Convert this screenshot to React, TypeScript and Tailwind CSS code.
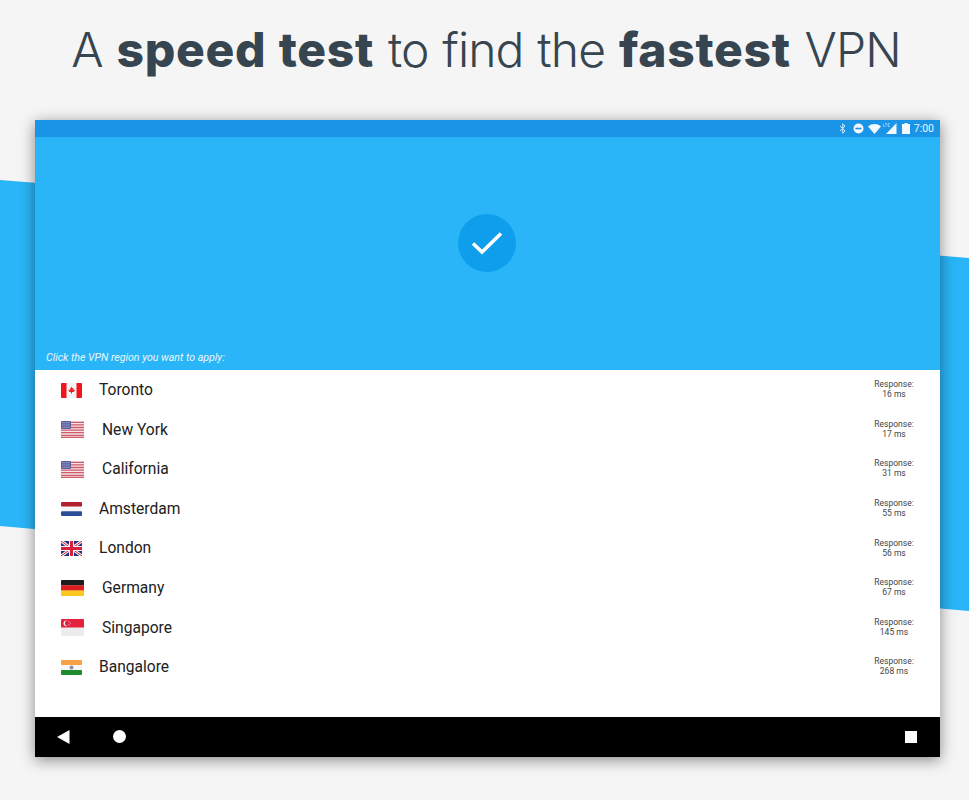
import type { ReactNode } from 'react'

// flags are small drawings, one per region
const FlagCanada = () => (
  <svg width="21" height="15" viewBox="0 0 21 15">
    <rect width="21" height="15" rx="1" fill="#f3f3f3" />
    <path d="M1 0h4.500v15H1a1 1 0 0 1-1-1V1a1 1 0 0 1 1-1zM15.500 0H20a1 1 0 0 1 1 1v13a1 1 0 0 1-1 1h-4.500z" fill="#f0141e" />
    <path d="M10.500 3.500l1 1.800 1-.4-.3 2.300 1.500-.6.200 1-1.200 1.400h-1.700v1.500h-1V9h-1.700L7.600 7.600l.2-1 1.500.6L9 4.900l1 .4z" fill="#e8202a" />
  </svg>
)

const FlagUS = () => (
  <svg width="23" height="17" viewBox="0 0 23 17">
    <rect width="23" height="17" rx="1" fill="#f4e4e6" />
    <path d="M0 1.300h23M0 3.900h23M0 6.500h23M0 9.100h23M0 11.700h23M0 14.300h23M0 16.400h23" stroke="#cf5a6a" strokeWidth="1.300" />
    <rect width="10" height="8" rx="1" fill="#5a5f9c" />
    <path d="M1.500 1.500h7M1.500 3.200h7M1.500 4.900h7M1.500 6.600h7" stroke="#c9cbe2" strokeWidth="0.800" strokeDasharray="1 1" />
  </svg>
)

const FlagNetherlands = () => (
  <svg width="21" height="14" viewBox="0 0 21 14">
    <rect width="21" height="4.700" rx="1" fill="#b3202e" />
    <rect y="4.700" width="21" height="4.600" fill="#f5f5f5" />
    <rect y="9.300" width="21" height="4.700" rx="1" fill="#2b4f96" />
  </svg>
)

const FlagUK = () => (
  <svg width="21" height="15" viewBox="0 0 21 15">
    <rect width="21" height="15" rx="1" fill="#2b2f7f" />
    <path d="M0 0l21 15M21 0L0 15" stroke="#f5f5f5" strokeWidth="3" />
    <path d="M0 0l21 15M21 0L0 15" stroke="#d8203a" strokeWidth="1" />
    <path d="M10.500 0v15M0 7.500h21" stroke="#f5f5f5" strokeWidth="5" />
    <path d="M10.500 0v15M0 7.500h21" stroke="#d8203a" strokeWidth="3" />
  </svg>
)

const FlagGermany = () => (
  <svg width="23" height="16" viewBox="0 0 23 16">
    <rect width="23" height="5.500" rx="1" fill="#1c1c1c" />
    <rect y="5.300" width="23" height="5.400" fill="#dc1e1e" />
    <rect y="10.500" width="23" height="5.500" rx="1" fill="#fbc81e" />
  </svg>
)

const FlagSingapore = () => (
  <svg width="23" height="17" viewBox="0 0 23 17">
    <rect width="23" height="17" rx="1" fill="#ececec" />
    <path d="M1 0h21a1 1 0 0 1 1 1v7.500H0V1a1 1 0 0 1 1-1z" fill="#e3223c" />
    <circle cx="5.500" cy="4.300" r="2.900" fill="#f6f6f6" />
    <circle cx="6.700" cy="4.300" r="2.700" fill="#e3223c" />
    <circle cx="8" cy="2.800" r="0.500" fill="#f6f6f6" />
    <circle cx="9.300" cy="4" r="0.500" fill="#f6f6f6" />
    <circle cx="8" cy="5.800" r="0.500" fill="#f6f6f6" />
  </svg>
)

const FlagIndia = () => (
  <svg width="21" height="15" viewBox="0 0 21 15">
    <rect width="21" height="5" rx="1" fill="#f7a144" />
    <rect y="5" width="21" height="5" fill="#f6f6f6" />
    <rect y="10" width="21" height="5" rx="1" fill="#1e8c2e" />
    <circle cx="10.500" cy="7.500" r="2" fill="#8d8da8" />
  </svg>
)

type Region = {
  name: string
  ms: number
  flag: ReactNode
  wide: boolean
}

const regions: Region[] = [
  { name: 'Toronto', ms: 16, flag: <FlagCanada />, wide: false },
  { name: 'New York', ms: 17, flag: <FlagUS />, wide: true },
  { name: 'California', ms: 31, flag: <FlagUS />, wide: true },
  { name: 'Amsterdam', ms: 55, flag: <FlagNetherlands />, wide: false },
  { name: 'London', ms: 56, flag: <FlagUK />, wide: false },
  { name: 'Germany', ms: 67, flag: <FlagGermany />, wide: true },
  { name: 'Singapore', ms: 145, flag: <FlagSingapore />, wide: true },
  { name: 'Bangalore', ms: 268, flag: <FlagIndia />, wide: false },
]

const StatusIcons = () => (
  <div className="flex items-center">
    <svg width="8" height="11" viewBox="0 0 8 11" fill="none" stroke="#cfeafc" strokeWidth="1">
      <path d="M1 3l5 5-2.300 2.200V.8L6 3 1 8" />
    </svg>
    <svg width="11" height="11" viewBox="0 0 11 11" className="ml-[6px]">
      <circle cx="5.500" cy="5.500" r="5" fill="#f2f9fe" />
      <rect x="2.500" y="4.700" width="6" height="1.600" fill="#1a94e6" />
    </svg>
    <svg width="13" height="10" viewBox="0 0 13 10" className="ml-[4px]">
      <path d="M0 2.500C3.500-.8 9.500-.8 13 2.500L6.500 10z" fill="#f2f9fe" />
    </svg>
    <svg width="14" height="11" viewBox="0 0 14 11" className="ml-[2px]">
      <path d="M13.500 0v11H3z" fill="#f2f9fe" />
      <path d="M.5 .5v3h1.500M3 .5v3M2 .5h2M5 .5v3h2M5 .5h2M5 2h1.500" stroke="#cfeafc" strokeWidth="0.500" fill="none" />
    </svg>
    <svg width="8" height="11" viewBox="0 0 8 11" className="ml-[5px]">
      <path d="M2.500 0h3v1H8v10H0V1h2.500z" fill="#f2f9fe" />
    </svg>
  </div>
)

export default function App() {
  return (
    <div className="relative w-[969px] h-[800px] overflow-hidden bg-[#f5f5f5] font-['Roboto',sans-serif]">
      {/* slanted blue band behind the tablet */}
      <div className="absolute inset-0 bg-[#29b5f7] [clip-path:polygon(0_180px,969px_258px,969px_611px,0_526px)]" />

      <div className="relative flex flex-col">
        <h1 className="h-[120px] pt-[18px] pl-[3px] w-full text-center text-[48px] leading-[64px] tracking-[-0.9px] [word-spacing:1.2px] font-light text-[#36454f] font-['Inter',sans-serif]">
          A <span className="font-extrabold tracking-[0.7px]">speed test</span> to find the{' '}
          <span className="font-extrabold tracking-[0.7px]">fastest</span> VPN
        </h1>

        <div className="ml-[35px] w-[905px] h-[637px] flex flex-col shadow-[0_3px_14px_rgba(0,0,0,0.45)]">
          {/* status bar */}
          <div className="h-[17px] bg-[#1a94e6] flex items-center justify-end gap-[4px] pr-[6px] text-[10.500px] text-[#e8f5fe]">
            <StatusIcons />
            <span>7:00</span>
          </div>

          {/* header with the check mark */}
          <div className="h-[233px] bg-[#29b5f7] flex flex-col">
            <div className="flex-1 flex items-center justify-center pb-[3px] pr-[2px]">
              <div className="w-[58px] h-[58px] rounded-full bg-[#0f9eec] flex items-center justify-center">
                <svg width="32" height="24" viewBox="0 0 32 24" fill="none" stroke="#fff" strokeWidth="3.500">
                  <path d="M2 12.500l9 8.500L30 2.500" />
                </svg>
              </div>
            </div>
            <p className="pl-[11px] pb-[5px] text-[10.600px] leading-[14px] italic text-[#eaf7fe]">
              Click the VPN region you want to apply:
            </p>
          </div>

          {/* region list */}
          <div className="h-[347px] pt-[1px] bg-white flex flex-col">
            {regions.map((r) => (
              <div key={r.name} className="h-[39.600px] shrink-0 flex items-center pl-[26px] pr-[26px]">
                <div className="w-[21px] mb-[1px] flex items-center [&>svg]:shrink-0">{r.flag}</div>
                <span className={`text-[15.600px] text-[#212121] ${r.wide ? 'ml-[20px]' : 'ml-[17px]'}`}>{r.name}</span>
                <div className="ml-auto mb-[3px] w-[40px] text-center text-[8.500px] leading-[10px] text-[#444]">
                  <div>Response:</div>
                  <div>{r.ms} ms</div>
                </div>
              </div>
            ))}
          </div>

          {/* navigation bar */}
          <div className="h-[40px] pb-[1px] bg-black flex items-center pl-[22px] pr-[23px]">
            <svg width="13" height="14" viewBox="0 0 13 14">
              <path d="M12.500 0v14L0 7z" fill="#fff" />
            </svg>
            <div className="ml-[43px] w-[13px] h-[13px] rounded-full bg-white" />
            <div className="ml-auto w-[12px] h-[12px] bg-white" />
          </div>
        </div>
      </div>
    </div>
  )
}
